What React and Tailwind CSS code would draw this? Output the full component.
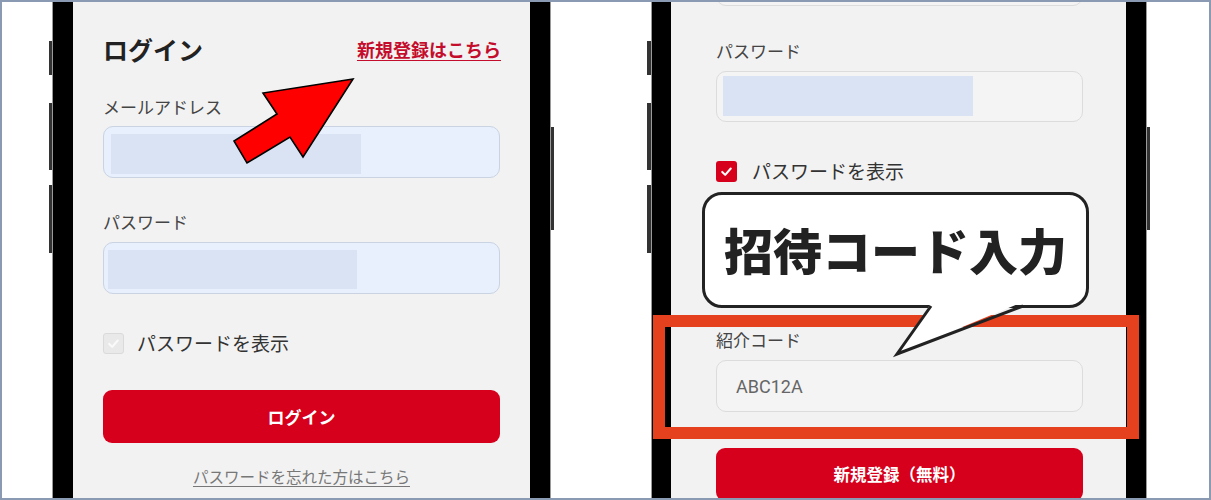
import React from "react";

const JP = { fontFamily: '"Noto Sans CJK JP", "Noto Sans", sans-serif' };

function Check({ color = "#fff" }) {
  return (
    <svg viewBox="0 0 20 20" className="w-full h-full">
      <path d="M5 10.5 L8.5 14 L15 6.5" fill="none" stroke={color} strokeWidth="2.4" strokeLinecap="round" strokeLinejoin="round" />
    </svg>
  );
}

function LeftButtons() {
  return (
    <div className="flex">
      <div className="w-[3px] flex flex-col">
        <div className="mt-[39px] h-[34px] bg-[#333]" />
        <div className="mt-[28px] h-[67px] bg-[#333]" />
        <div className="mt-[15px] h-[68px] bg-[#333]" />
      </div>
      <div className="w-[1px] bg-[#9a9a9a]" />
    </div>
  );
}

function RightButtons() {
  return (
    <div className="flex">
      <div className="w-[1px] bg-[#9a9a9a]" />
      <div className="w-[3px] flex flex-col">
        <div className="mt-[125px] h-[103px] bg-[#333]" />
      </div>
    </div>
  );
}

function LeftScreen() {
  return (
    <div className="w-[457px] h-full bg-[#f2f2f2] overflow-hidden px-[30px]" style={JP}>
      <div className="mt-[32px] h-[30px] flex items-center justify-between">
        <span className="text-[25px] leading-[30px] font-bold text-[#222]">ログイン</span>
        <span className="text-[18px] leading-[24px] font-bold text-[#c40d2c] underline underline-offset-[3px] mr-[-1px]">新規登録はこちら</span>
      </div>
      <div className="mt-[31px] h-[24px] text-[17px] leading-[24px] text-[#444]">メールアドレス</div>
      <div className="mt-[7px] h-[52px] rounded-[10px] border border-[#c9d3e2] bg-[#e8f0fe] pt-[7px] pl-[7px]">
        <div className="w-[250px] h-[40px] bg-[#dae3f3]" />
      </div>
      <div className="mt-[32px] h-[24px] text-[17px] leading-[24px] text-[#444]">パスワード</div>
      <div className="mt-[8px] h-[52px] rounded-[10px] border border-[#c9d3e2] bg-[#e8f0fe] pt-[7px] pl-[4px]">
        <div className="w-[249px] h-[39px] bg-[#dae3f3]" />
      </div>
      <div className="mt-[37px] h-[24px] flex items-center">
        <div className="w-[21px] h-[21px] rounded-[3px] border border-[#dadada] bg-[#e9e9e9] p-[1px]">
          <Check color="#fafafa" />
        </div>
        <span className="ml-[13px] text-[19px] leading-[24px] text-[#333]">パスワードを表示</span>
      </div>
      <div className="mt-[35px] h-[53px] rounded-[9px] bg-[#d6001c] flex items-center justify-center">
        <span className="text-[17px] font-bold text-white">ログイン</span>
      </div>
      <div className="mt-[23px] h-[20px] flex justify-center">
        <span className="text-[15.5px] leading-[20px] text-[#777] underline underline-offset-[3px]">パスワードを忘れた方はこちら</span>
      </div>
    </div>
  );
}

function RightScreen() {
  return (
    <div className="w-[455px] h-full bg-[#f2f2f2] overflow-hidden pl-[45px] pr-[43px]" style={JP}>
      <div className="mt-[-48px] h-[52px] rounded-[10px] border border-[#dcdcdc] bg-[#f4f4f4]" />
      <div className="mt-[33px] h-[24px] text-[17px] leading-[24px] text-[#444]">パスワード</div>
      <div className="mt-[8px] h-[51px] rounded-[10px] border border-[#dcdcdc] bg-[#f4f4f4] pt-[4px] pl-[6px]">
        <div className="w-[250px] h-[40px] bg-[#dae3f3]" />
      </div>
      <div className="mt-[37px] h-[24px] flex items-center">
        <div className="w-[21px] h-[21px] rounded-[3px] bg-[#d6001c] p-[2px]">
          <Check />
        </div>
        <span className="ml-[15px] text-[19px] leading-[24px] text-[#333]">パスワードを表示</span>
      </div>
      <div className="mt-[145px] h-[24px] text-[17px] leading-[24px] text-[#444]">紹介コード</div>
      <div className="mt-[8px] h-[52px] rounded-[10px] border border-[#dcdcdc] bg-[#f4f4f4] flex items-center pl-[19px]">
        <span className="text-[18px] text-[#666]" style={{ fontFamily: 'Roboto, "Noto Sans", sans-serif' }}>ABC12A</span>
      </div>
      <div className="mt-[36px] h-[53px] rounded-[9px] bg-[#d6001c] flex items-center justify-center">
        <span className="text-[16.5px] font-bold text-white">新規登録（無料）</span>
      </div>
    </div>
  );
}

export default function App() {
  return (
    <div className="relative w-[1211px] h-[500px] border-2 border-[#8a9ab2] bg-white overflow-hidden">
      <div className="flex h-full">
        <div className="w-[47px]" />
        <LeftButtons />
        <div className="w-[20px] bg-black" />
        <LeftScreen />
        <div className="w-[20px] bg-black" />
        <RightButtons />
        <div className="w-[93px]" />
        <div className="flex">
          <div className="w-[4px] flex flex-col">
            <div className="mt-[39px] h-[34px] bg-[#333]" />
            <div className="mt-[28px] h-[67px] bg-[#333]" />
            <div className="mt-[15px] h-[68px] bg-[#333]" />
          </div>
          <div className="w-[1px] bg-[#9a9a9a]" />
        </div>
        <div className="w-[19px] bg-black" />
        <RightScreen />
        <div className="w-[20px] bg-black" />
        <RightButtons />
      </div>

      <div className="absolute left-[651px] top-[313px] w-[486px] h-[124px] border-[12px] border-[#e6411e]" />

      <div className="absolute left-[700px] top-[190px] w-[387px] h-[116px] rounded-[20px] border-[3px] border-[#222] bg-white flex items-center justify-center">
        <span className="text-[49px] leading-none font-black text-[#222] mt-[-4px]" style={JP}>招待コード入力</span>
      </div>

      <svg className="absolute left-0 top-0 w-[1207px] h-[496px] pointer-events-none" viewBox="2 2 1207 496">
        <polygon points="353,79 263,93 277,114 234,141 247,163 290,137 303,157" fill="#ff0000" stroke="#000" strokeWidth="1.6" strokeLinejoin="miter" />
        <polygon points="932,302 897,354 1023,302" fill="#fff" />
        <polyline points="931,306 897,354 1023,306" fill="none" stroke="#222" strokeWidth="3" strokeLinejoin="miter" />
      </svg>
    </div>
  );
}
